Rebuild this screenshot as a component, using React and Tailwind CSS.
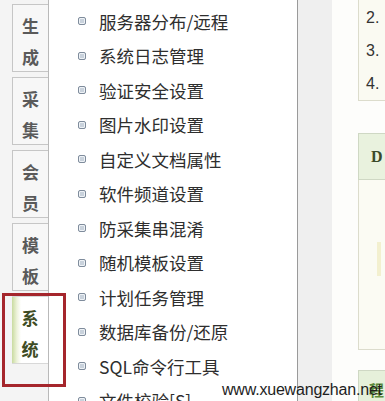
import React from "react";

const tabs = [
  ["生", "成"],
  ["采", "集"],
  ["会", "员"],
  ["模", "板"],
];

const items = [
  "服务器分布/远程",
  "系统日志管理",
  "验证安全设置",
  "图片水印设置",
  "自定义文档属性",
  "软件频道设置",
  "防采集串混淆",
  "随机模板设置",
  "计划任务管理",
  "数据库备份/还原",
  "SQL命令行工具",
  "文件校验[S]",
];

const cjk = { fontFamily: '"Noto Sans CJK SC", "Noto Sans", sans-serif' };

function Bullet() {
  return (
    <span className="inline-block w-[8px] h-[8px] rounded-[2px] border border-[#7f8c9c] bg-[#c9d2dc] shadow-[inset_0_0_0_1px_#eef2f6] shrink-0" />
  );
}

export default function App() {
  return (
    <div className="relative w-[385px] h-[401px] overflow-hidden bg-white flex" style={cjk}>
      {/* left tab column */}
      <div className="w-[49px] h-full bg-[#f4f4f4] border-r border-[#b9b9b9] flex flex-col gap-[5px] pt-[4px] pl-[12px] shrink-0">
        {tabs.map((t, i) => (
          <div
            key={i}
            className="h-[68px] w-[36px] bg-[#f7f7f7] border border-[#c6c6c6] border-r-0 flex flex-col items-center pt-[5px] leading-[31px] text-[17px] font-bold text-[#5a5a5a]"
          >
            <span>{t[0]}</span>
            <span>{t[1]}</span>
          </div>
        ))}
        <div className="h-[68px] w-[36px] bg-[linear-gradient(to_right,#c9dba0_0px,#eef3dc_5px,#ffffff_9px)] border-t border-b border-[#d8d8d8] flex flex-col items-center pt-[5px] leading-[31px] text-[17px] font-bold text-[#3e4c24]">
          <span>系</span>
          <span>统</span>
        </div>
      </div>

      {/* menu column */}
      <div className="w-[248px] h-full shrink-0 pt-[4px] pl-[29px]">
        {items.map((it) => (
          <div key={it} className="h-[34.5px] flex items-center gap-[13px]">
            <Bullet />
            <span className="text-[17.5px] text-[#2e2e2e] leading-none whitespace-nowrap">{it}</span>
          </div>
        ))}
      </div>

      {/* splitter */}
      <div className="w-[35px] h-full shrink-0 border-l border-[#9a9a9a] bg-[#efefef]" />

      {/* right content */}
      <div className="flex-1 h-full bg-[#fdfdfb] pl-[26px] flex flex-col">
        <div className="h-[101px] bg-[#fafaf2] border border-t-0 border-r-0 border-[#dcdccc] pl-[7px] flex flex-col pt-[1px]">
          {["2.", "3.", "4."].map((n) => (
            <div key={n} className="h-[34px] flex items-center text-[16px] text-[#333] font-['Liberation_Sans',sans-serif]">
              {n}
            </div>
          ))}
        </div>
        <div className="h-[32px]" />
        <div className="h-[47px] bg-[#e9f2de] border border-r-0 border-[#cfd8c4] flex items-center pl-[12px] text-[16px] font-bold text-[#3b4a2a] font-['Liberation_Serif',serif]">
          D
        </div>
        <div className="h-[170px] bg-[#fbfbf3] border border-t-0 border-r-0 border-[#dcdccc] relative">
          <div className="absolute left-[18px] top-[62px] w-[4px] h-[34px] bg-[#f3f0cf]" />
        </div>
        <div className="h-[20px]" />
        <div className="flex-1 bg-[#e6f0da] border border-b-0 border-r-0 border-[#cfd8c4] relative">
          <span className="absolute left-[10px] top-[8px] text-[15px] font-bold text-[#5c8a3a]">程</span>
        </div>
      </div>

      {/* annotation box */}
      <div className="absolute left-[2px] top-[293px] w-[64px] h-[94px] border-[3px] border-[#a5262c]" />

      {/* watermark */}
      <div className="absolute left-[222px] top-[382px] text-[16px] leading-none text-[#1e1e1e] font-['Liberation_Sans',sans-serif] tracking-[-0.2px]">
        www.xuewangzhan.net
      </div>
    </div>
  );
}
